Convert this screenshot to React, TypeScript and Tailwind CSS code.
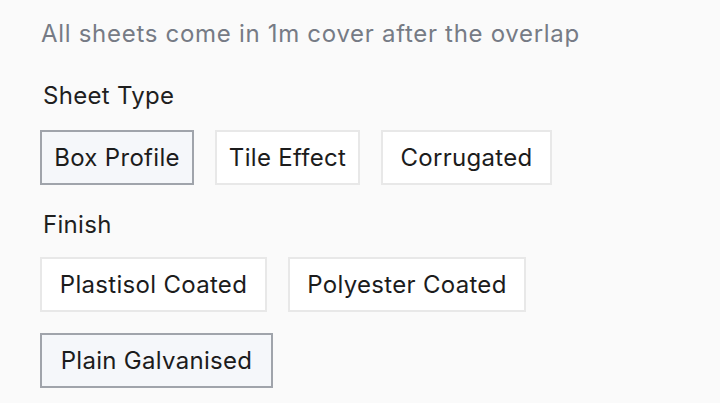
import { useState } from 'react';

const sheetTypes = [
  { label: 'Box Profile', width: 'w-[154px]' },
  { label: 'Tile Effect', width: 'w-[145px]' },
  { label: 'Corrugated', width: 'w-[171px]' },
];

const finishes = [
  { label: 'Plastisol Coated', width: 'w-[227px]' },
  { label: 'Polyester Coated', width: 'w-[238px]' },
  { label: 'Plain Galvanised', width: 'w-[233px]' },
];

function OptionButton({
  label,
  width,
  selected,
  onClick,
}: {
  label: string;
  width: string;
  selected: boolean;
  onClick: () => void;
}) {
  return (
    <button
      type="button"
      onClick={onClick}
      className={`${width} h-[55px] border-2 text-[24px] tracking-[0.3px] text-[#1c1c1c] ${
        selected ? 'border-[#a0a4ab] bg-[#f5f7fa]' : 'border-[#e8e8e8] bg-white'
      }`}
    >
      {label}
    </button>
  );
}

export default function App() {
  const [sheet, setSheet] = useState('Box Profile');
  const [finish, setFinish] = useState('Plain Galvanised');

  return (
    <div className="min-h-[403px] bg-[#fafafa] px-[40px] pt-[17px] font-['Inter',sans-serif]">
      <p className="pl-[1px] text-[24px] leading-[34px] tracking-[0.7px] text-[#767b85]">
        All sheets come in 1m cover after the overlap
      </p>

      <p className="mt-[30px] pl-[3px] text-[24px] leading-[30px] tracking-[0.3px] text-[#1f1f1f]">Sheet Type</p>
      <div className="mt-[19px] flex flex-wrap gap-[21px]">
        {sheetTypes.map((t) => (
          <OptionButton
            key={t.label}
            label={t.label}
            width={t.width}
            selected={sheet === t.label}
            onClick={() => setSheet(t.label)}
          />
        ))}
      </div>

      <p className="mt-[25px] pl-[3px] text-[24px] leading-[30px] tracking-[0.3px] text-[#1f1f1f]">Finish</p>
      <div className="mt-[17px] flex flex-wrap gap-[21px]">
        {finishes.map((f) => (
          <OptionButton
            key={f.label}
            label={f.label}
            width={f.width}
            selected={finish === f.label}
            onClick={() => setFinish(f.label)}
          />
        ))}
      </div>
    </div>
  );
}
